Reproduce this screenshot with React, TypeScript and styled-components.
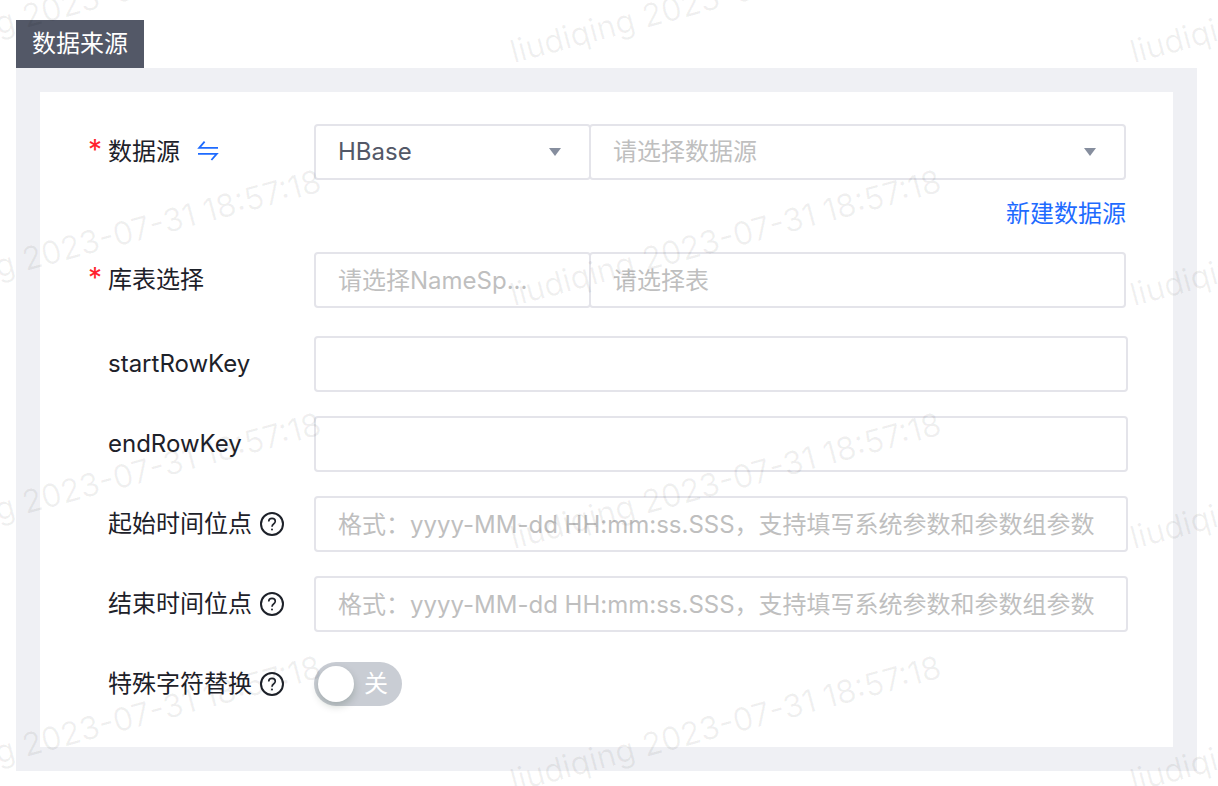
import React, { useState } from "react";
import styled, { createGlobalStyle, css } from "styled-components";

const GlobalStyle = createGlobalStyle`
  *, *::before, *::after { box-sizing: border-box; }
  body {
    margin: 0;
    background: #fff;
    color: #1d2129;
    font-family: Inter, "Noto Sans CJK SC", sans-serif;
    font-size: 24px;
    line-height: 36px;
  }
  input, select, button { font: inherit; }
`;

const Page = styled.main`
  position: relative;
  min-height: 100vh;
  padding: 20px 21px 15px 16px;
  overflow: hidden;
`;

const SectionTitle = styled.h2`
  display: table;
  margin: 0;
  padding: 0 16px;
  background: #535867;
  color: #fff;
  font-size: 24px;
  font-weight: 400;
  line-height: 48px;
`;

const Panel = styled.section`
  padding: 24px;
  background: #eff0f4;
`;

const Card = styled.form`
  padding: 32px 45px 35px 48px;
  background: #fff;
`;

const Row = styled.div`
  display: flex;
  align-items: center;
  min-height: 56px;
  & + & {
    margin-top: 24px;
  }
`;

const RowGroup = styled.div`
  margin-top: 28px;
`;

const LabelCell = styled.div`
  display: flex;
  align-items: center;
  flex: 0 0 226px;
  gap: 8px;
`;

const Mark = styled.span`
  width: 12px;
  padding-bottom: 4px;
  color: #ff1f2e;
  font-size: 28px;
  line-height: 32px;
  text-align: center;
`;

const IconButton = styled.button`
  display: flex;
  margin-left: 8px;
  padding: 0;
  border: 0;
  background: none;
  color: #1e6bff;
  cursor: pointer;
`;

const HelpButton = styled(IconButton)`
  margin-left: 0;
  color: #1d2129;
`;

const Pair = styled.div`
  display: flex;
  flex: 1;
  min-width: 0;
  margin-right: 2px;
`;

const Slot = styled.div<{ $arrow?: boolean }>`
  position: relative;
  flex: 1;
  min-width: 0;
  &:first-child {
    flex: 0 0 277px;
  }
  & + & {
    margin-left: -2px;
  }
  ${(p) =>
    p.$arrow &&
    css`
      &::after {
        content: "";
        position: absolute;
        top: 24px;
        right: 30px;
        border: 6px solid transparent;
        border-top: 8px solid #868e9e;
        border-bottom: 0;
        pointer-events: none;
      }
    `}
`;

const fieldStyle = css`
  display: block;
  width: 100%;
  height: 56px;
  margin: 0;
  padding: 0 22px;
  border: 2px solid #e4e4ea;
  border-radius: 4px;
  background: #fff;
  color: #535867;
  outline: none;
  &:focus {
    border-color: #1e6bff;
  }
`;

const Field = styled.input`
  ${fieldStyle}
  &::placeholder {
    color: #bfbfbf;
    opacity: 1;
  }
`;

const Select = styled.select<{ $empty?: boolean }>`
  ${fieldStyle}
  appearance: none;
  color: ${(p) => (p.$empty ? "#bfbfbf" : "#535867")};
`;

const LinkRow = styled.div`
  padding: 16px 2px 20px 0;
  text-align: right;
`;

const Link = styled.a`
  color: #1e6bff;
  text-decoration: none;
`;

const Switch = styled.label`
  display: flex;
  align-items: center;
  gap: 10px;
  width: 88px;
  height: 44px;
  padding: 4px;
  border-radius: 22px;
  background: #c9cdd4;
  color: #fff;
  cursor: pointer;
  &:has(:checked) {
    flex-direction: row-reverse;
    background: #1e6bff;
  }
`;

const Knob = styled.input`
  appearance: none;
  width: 36px;
  height: 36px;
  margin: 0;
  border-radius: 50%;
  background: #fff;
  box-shadow: 0 4px 8px rgba(0, 35, 11, 0.2);
  cursor: pointer;
`;

const WatermarkLayer = styled.div`
  position: absolute;
  inset: 0 0 0 -104px;
  display: grid;
  grid-template-columns: repeat(auto-fill, 620px);
  grid-auto-rows: 243px;
  width: 1860px;
  overflow: hidden;
  color: rgba(0, 0, 0, 0.06);
  font-size: 32px;
  line-height: 40px;
  white-space: nowrap;
  pointer-events: none;
  user-select: none;
`;

const Stamp = styled.span`
  height: 40px;
  margin-top: 32px;
  transform: rotate(-15deg);
  transform-origin: 0 100%;
`;

function SwapIcon() {
  return (
    <svg width="24" height="24" viewBox="0 0 24 24" fill="none" stroke="currentColor" strokeWidth="1.8">
      <path d="M22 7.8H3.2L8.600 1.600" />
      <path d="M2 13.800H20.800L15.400 20" />
    </svg>
  );
}

function HelpIcon() {
  return (
    <svg width="24" height="24" viewBox="0 0 24 24" fill="none" stroke="currentColor">
      <circle cx="12" cy="12" r="11" strokeWidth="2" />
      <path d="M8.7 9.4C8.7 7.5 10.1 6.4 12 6.4s3.3 1.1 3.3 2.9c0 1.3-.7 2-1.7 2.7S12 13.3 12 14.8" strokeWidth="1.6" />
      <circle cx="12" cy="17.5" r="1" fill="currentColor" stroke="none" />
    </svg>
  );
}

type LabelProps = { text: string; htmlFor: string; required?: boolean; help?: boolean; swap?: boolean };

function FieldLabel({ text, htmlFor, required, help, swap }: LabelProps) {
  return (
    <LabelCell>
      <Mark aria-hidden="true">{required ? "*" : ""}</Mark>
      <label htmlFor={htmlFor}>{text}</label>
      {swap && (
        <IconButton type="button" aria-label="切换">
          <SwapIcon />
        </IconButton>
      )}
      {help && (
        <HelpButton type="button" aria-label={text + "说明"}>
          <HelpIcon />
        </HelpButton>
      )}
    </LabelCell>
  );
}

const TIME_HINT = "格式：yyyy-MM-dd HH:mm:ss.SSS，支持填写系统参数和参数组参数";

const textFields = [
  { id: "startRowKey", text: "startRowKey" },
  { id: "endRowKey", text: "endRowKey" },
  { id: "startTime", text: "起始时间位点", hint: TIME_HINT, help: true },
  { id: "endTime", text: "结束时间位点", hint: TIME_HINT, help: true },
];

const stamps = Array.from({ length: 12 }, (_, i) => i);

export default function App() {
  const [replace, setReplace] = useState(false);

  return (
    <>
      <GlobalStyle />
      <Page>
        <SectionTitle>数据来源</SectionTitle>
        <Panel>
          <Card>
            <Row>
              <FieldLabel text="数据源" htmlFor="sourceType" required swap />
              <Pair>
                <Slot $arrow>
                  <Select id="sourceType" defaultValue="HBase">
                    <option>HBase</option>
                  </Select>
                </Slot>
                <Slot $arrow>
                  <Select $empty aria-label="数据源名称" defaultValue="">
                    <option value="">请选择数据源</option>
                  </Select>
                </Slot>
              </Pair>
            </Row>
            <LinkRow>
              <Link href="#new">新建数据源</Link>
            </LinkRow>
            <Row>
              <FieldLabel text="库表选择" htmlFor="namespace" required />
              <Pair>
                <Slot>
                  <Field id="namespace" placeholder="请选择NameSp..." />
                </Slot>
                <Slot>
                  <Field aria-label="表" placeholder="请选择表" />
                </Slot>
              </Pair>
            </Row>
            <RowGroup>
              {textFields.map((f) => (
                <Row key={f.id}>
                  <FieldLabel text={f.text} htmlFor={f.id} help={f.help} />
                  <Field id={f.id} placeholder={f.hint} />
                </Row>
              ))}
              <Row>
                <FieldLabel text="特殊字符替换" htmlFor="replace" help />
                <Switch>
                  <Knob
                    id="replace"
                    type="checkbox"
                    checked={replace}
                    onChange={(e) => setReplace(e.target.checked)}
                  />
                  <span>{replace ? "开" : "关"}</span>
                </Switch>
              </Row>
            </RowGroup>
          </Card>
        </Panel>
        <WatermarkLayer aria-hidden="true">
          {stamps.map((i) => (
            <Stamp key={i}>liudiqing 2023-07-31 18:57:18</Stamp>
          ))}
        </WatermarkLayer>
      </Page>
    </>
  );
}
